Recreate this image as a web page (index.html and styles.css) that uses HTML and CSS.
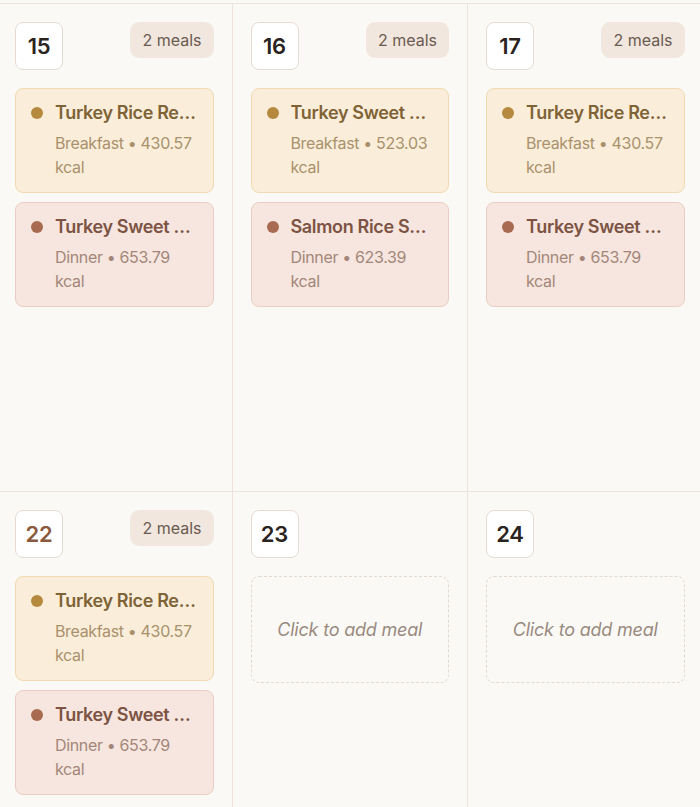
FILE: index.html
```html
<!DOCTYPE html>
<html lang="en">
<head>
<meta charset="utf-8">
<title>Meal calendar</title>
<link rel="stylesheet" href="styles.css">
</head>
<body>
<div class="page">
  <div class="calendar">
    <div class="cell">
      <div class="cell-head">
        <div class="day">15</div>
        <div class="count">2 meals</div>
      </div>
      <div class="meals">
        <div class="meal breakfast">
          <div class="meal-title"><span class="dot"></span><span class="name">Turkey Rice Retreat Bowl</span></div>
          <div class="meal-sub">Breakfast • 430.57 kcal</div>
        </div>
        <div class="meal dinner">
          <div class="meal-title"><span class="dot"></span><span class="name">Turkey Sweet Potato Skillet</span></div>
          <div class="meal-sub">Dinner • 653.79 kcal</div>
        </div>
      </div>
    </div>
    <div class="cell">
      <div class="cell-head">
        <div class="day">16</div>
        <div class="count">2 meals</div>
      </div>
      <div class="meals">
        <div class="meal breakfast">
          <div class="meal-title"><span class="dot"></span><span class="name">Turkey Sweet Potato Hash</span></div>
          <div class="meal-sub">Breakfast • 523.03 kcal</div>
        </div>
        <div class="meal dinner">
          <div class="meal-title"><span class="dot"></span><span class="name">Salmon Rice Skillet</span></div>
          <div class="meal-sub">Dinner • 623.39 kcal</div>
        </div>
      </div>
    </div>
    <div class="cell">
      <div class="cell-head">
        <div class="day">17</div>
        <div class="count">2 meals</div>
      </div>
      <div class="meals">
        <div class="meal breakfast">
          <div class="meal-title"><span class="dot"></span><span class="name">Turkey Rice Retreat Bowl</span></div>
          <div class="meal-sub">Breakfast • 430.57 kcal</div>
        </div>
        <div class="meal dinner">
          <div class="meal-title"><span class="dot"></span><span class="name">Turkey Sweet Potato Skillet</span></div>
          <div class="meal-sub">Dinner • 653.79 kcal</div>
        </div>
      </div>
    </div>
    <div class="cell">
      <div class="cell-head">
        <div class="day today">22</div>
        <div class="count">2 meals</div>
      </div>
      <div class="meals">
        <div class="meal breakfast">
          <div class="meal-title"><span class="dot"></span><span class="name">Turkey Rice Retreat Bowl</span></div>
          <div class="meal-sub">Breakfast • 430.57 kcal</div>
        </div>
        <div class="meal dinner">
          <div class="meal-title"><span class="dot"></span><span class="name">Turkey Sweet Potato Skillet</span></div>
          <div class="meal-sub">Dinner • 653.79 kcal</div>
        </div>
      </div>
    </div>
    <div class="cell">
      <div class="cell-head">
        <div class="day">23</div>
      </div>
      <div class="empty">Click to add meal</div>
    </div>
    <div class="cell">
      <div class="cell-head">
        <div class="day">24</div>
      </div>
      <div class="empty">Click to add meal</div>
    </div>
  </div>
</div>
</body>
</html>
```
FILE: styles.css
```css
* { box-sizing: border-box; }
html, body {
  margin: 0;
  padding: 0;
  background: #fbf9f6;
  overflow: hidden;
}
body {
  font-family: Inter, "Noto Sans", sans-serif;
  color: #2b2320;
}
.page {
  width: 700px;
  height: 807px;
  overflow: hidden;
  padding-top: 3px;
}
.calendar {
  display: grid;
  grid-template-columns: repeat(3, 235.5px);
  margin-left: -4px;
}
.cell {
  min-height: 488px;
  border-top: 1px solid #ebe3dc;
  border-left: 1px solid #ebe3dc;
  padding: 18px;
  display: flex;
  flex-direction: column;
  gap: 18px;
}
.cell-head {
  display: flex;
  justify-content: space-between;
  align-items: flex-start;
}
.day {
  width: 48px;
  height: 48px;
  border: 1px solid #e6dbd3;
  border-radius: 8px;
  background: #ffffff;
  display: flex;
  align-items: center;
  justify-content: center;
  font-size: 22px;
  font-weight: 600;
  letter-spacing: -0.2px;
  color: #2b2320;
}
.day.today { color: #8b5a3c; }
.count {
  height: 36px;
  padding: 0 12px;
  border-radius: 9px;
  background: #f1e7df;
  color: #6b5a50;
  font-size: 16px;
  line-height: 36px;
}
.meals {
  display: flex;
  flex-direction: column;
  gap: 9px;
}
.meal {
  height: 105px;
  border: 1px solid;
  border-radius: 8px;
  padding: 10px 15px 13px;
}
.meal-title {
  display: flex;
  align-items: center;
  gap: 12px;
  font-size: 18px;
  font-weight: 600;
  line-height: 27px;
  letter-spacing: -0.35px;
  margin-bottom: 5px;
}
.dot {
  flex: none;
  width: 12px;
  height: 12px;
  border-radius: 50%;
}
.name {
  min-width: 0;
  white-space: nowrap;
  overflow: hidden;
  text-overflow: ellipsis;
}
.meal-sub {
  padding-left: 24px;
  font-size: 16px;
  line-height: 24px;
  letter-spacing: -0.35px;
}
.breakfast {
  background: #faeedb;
  border-color: #efdbb1;
}
.breakfast .dot { background: #b5893e; }
.breakfast .meal-title { color: #7f6336; }
.breakfast .meal-sub { color: #a9916c; }
.dinner {
  background: #f6e6df;
  border-color: #e9cfc3;
}
.dinner .dot { background: #a86a50; }
.dinner .meal-title { color: #7d5343; }
.dinner .meal-sub { color: #a38679; }
.empty {
  height: 107px;
  border: 1px dashed #e2d9d1;
  border-radius: 8px;
  display: flex;
  align-items: center;
  justify-content: center;
  font-size: 18px;
  font-style: italic;
  letter-spacing: -0.2px;
  color: #998a80;
}
```
